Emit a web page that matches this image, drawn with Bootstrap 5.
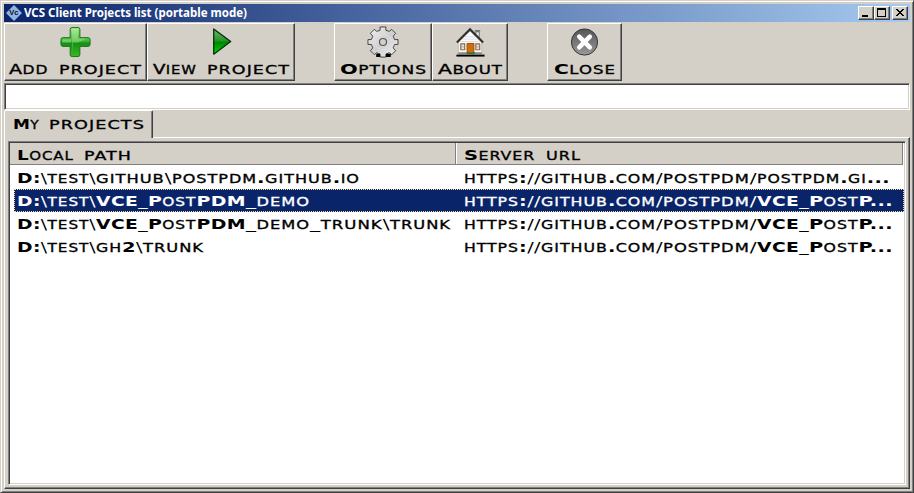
<!DOCTYPE html>
<html lang="en">
<head>
<meta charset="utf-8">
<meta name="viewport" content="width=device-width, initial-scale=1">
<title>VCS Client Projects list</title>
<link rel="stylesheet" href="https://cdn.jsdelivr.net/npm/bootstrap@5.3.0/dist/css/bootstrap.min.css">
<style>
:root { --face:#d4d0c8; --shade:#808080; --dark:#404040; }
body { font-family:"DejaVu Sans",sans-serif; font-size:14px; line-height:20px; color:#000; background:var(--face); }
.win { width:914px; height:493px; background:var(--face); padding:3px 2px 2px 3px; border:1px solid; border-color:var(--face) var(--dark) var(--dark) var(--face); box-shadow:inset 1px 1px #fff, inset -1px -1px var(--shade); }
.titlebar { height:18px; margin-right:1px; background:linear-gradient(90deg,#0a246a,#a6caf0); color:#fff; padding:0 2px 0 2px; }
.titlebar .caption { font-family:"Noto Sans",sans-serif; font-size:12px; font-weight:700; line-height:18px; margin-left:2px; }
.raised { background:var(--face); border:1px solid; border-color:#fff var(--dark) var(--dark) #fff; box-shadow:inset -1px -1px var(--shade); }
.winbtn { width:16px; height:14px; padding:0; }
.winbtn-close { margin-left:2px; }
.winbtn svg, .tool svg { display:block; }
.toolbar-row { height:61px; padding-top:1px; margin-right:1px; }
.tool { height:58px; padding:2px 0 0 0; color:#000; }
.tool svg { width:34px; height:34px; }
.t-add { width:143px; } .t-view { width:148px; margin-right:39px; }
.t-opt { width:98px; } .t-about { width:76px; margin-right:39px; } .t-close { width:75px; }
.sunken { background:#fff; border:1px solid; border-color:var(--shade) #fff #fff var(--shade); box-shadow:inset 1px 1px var(--dark), inset -1px -1px var(--face); }
.entry { height:27px; outline:0; border-radius:0; padding:3px; width:906px; }
.tabstrip { height:27px; position:relative; }
.tab { width:149px; height:28px; background:var(--face); border:solid; border-width:1px 1px 0 1px; border-color:#fff var(--dark) #fff #fff; box-shadow:inset -1px 0 var(--shade); border-radius:2px 2px 0 0; padding:3px 0 0 8px; }
.page { height:352px; margin-right:1px; padding:3px 3px 2px 3px; border:1px solid; border-color:#fff var(--dark) var(--dark) #fff; box-shadow:inset -1px -1px var(--shade); }
.listing { height:344px; padding:1px; }
.heads { height:22px; margin-bottom:1px; background:var(--face); border-bottom:1px solid var(--shade); width:893px; border-right:1px solid var(--shade); }
.head { padding:2px 0 0 7px; }
.head-a { width:446px; border-right:1px solid var(--shade); }
.head-b { border-left:1px solid #fff; }
.line { height:23px; width:890px; margin-left:4px; padding:2px 0 0 3px; }
.line.picked { background:#0a246a; color:#fff; outline:1px dotted #f5db95; outline-offset:-1px; }
.path { width:447px; }
.fit { display:inline-block; white-space:pre; vertical-align:top; text-align:left; }
.fit > span { display:inline-block; transform-origin:0 50%; }
.sc { font-size:11.4px; text-transform:uppercase; letter-spacing:.7px; -webkit-text-stroke:.3px; }
.cap { font-weight:700; letter-spacing:.3px; }
.cap.thin { font-weight:400; word-spacing:3px; -webkit-text-stroke:.4px; }
.cap.rule { font-weight:400; word-spacing:3px; }
</style>
<script src="https://cdn.jsdelivr.net/npm/bootstrap@5.3.0/dist/js/bootstrap.bundle.min.js"></script>
</head>
<body class="overflow-hidden">
<main class="win d-flex flex-column">
  <header class="titlebar d-flex align-items-center">
    <svg width="16" height="16" viewBox="0 0 16 16"><path d="M8 0l8 8-8 8-8-8z" fill="#8fb4e4"/><text x="3.2" y="10.4" font-family="Liberation Sans,sans-serif" font-weight="700" font-size="7.5" fill="#111">Vc</text></svg>
    <div class="caption"><span class="fit" data-w="223" data-plain>VCS Client Projects list (portable mode)</span></div>
    <div class="d-flex ms-auto">
      <button class="winbtn raised" aria-label="Minimize"><svg width="14" height="12"><path d="M3 8h6v2H3z"/></svg></button>
      <button class="winbtn raised" aria-label="Maximize"><svg width="14" height="12" shape-rendering="crispEdges"><path fill-rule="evenodd" d="M2 1h9v9H2zM3 3v6h7V3z"/></svg></button>
      <button class="winbtn winbtn-close raised" aria-label="Close"><svg width="14" height="12" shape-rendering="crispEdges"><path d="M3 2h2v1h1v1h2V3h1V2h2v1h-1v1H9v1H8v1h1v1h1v1h1v1H9V8H8V7H6v1H5v1H3V8h1V7h1V6h1V5H5V4H4V3H3z"/></svg></button>
    </div>
  </header>

  <nav class="toolbar-row d-flex align-items-start">
    <button class="tool raised t-add d-flex flex-column align-items-center">
      <svg viewBox="0 0 34 34"><defs><linearGradient id="green" x1="0" y1="0" x2="0" y2="1"><stop offset="0" stop-color="#a0e58c"/><stop offset=".45" stop-color="#48b83a"/><stop offset=".55" stop-color="#159016"/><stop offset="1" stop-color="#38ba21"/></linearGradient></defs><path d="M13 1.500h6q2 0 2 2V12h8.500q2 0 2 2v5q0 2-2 2H21v8.500q0 2-2 2h-6q-2 0-2-2V21H3.500q-2 0-2-2v-5q0-2 2-2H11V3.500q0-2 2-2z" fill="url(#green)" stroke="#16711a"/><path d="M13 3h6v10h9l-9 4h-5l-1 11zM3 14h9v3H3z" fill="#c6f5b7" opacity=".35"/></svg>
      <div><span class="fit" data-w="50">Add </span><span class="fit" data-w="83">project</span></div>
    </button>
    <button class="tool raised t-view d-flex flex-column align-items-center">
      <svg viewBox="0 0 34 34"><defs><linearGradient id="play" x1="0" y1="0" x2="0" y2="1"><stop stop-color="#6fb86c"/><stop offset=".48" stop-color="#249226"/><stop offset=".53" stop-color="#008600"/><stop offset="1" stop-color="#00dc00"/></linearGradient></defs><path d="M9.500 3v26L27 16z" fill="url(#play)" stroke="#062c08" stroke-width="1.300" stroke-linejoin="round"/></svg>
      <div><span class="fit" data-w="54">View </span><span class="fit" data-w="83">project</span></div>
    </button>
    <button class="tool raised t-opt d-flex flex-column align-items-center">
      <svg viewBox="0 0 34 34"><defs><linearGradient id="gear" x1="0" y1="0" x2="1" y2="1"><stop stop-color="#f4f4f4"/><stop offset=".5" stop-color="#cfcfcf"/><stop offset="1" stop-color="#f2f2f2"/></linearGradient></defs><path d="M14 1h6v3.500l3.500 1L26 3.500l4 4-2.500 3 1.500 3.500h3.500v5H29l-1.500 3.500L30 25.500l-4 4-2.500-2L20 29v3h-6v-3l-3.500-1.500-2.500 2-4-4 2.500-3L5 19H1.500v-5H5l1.500-3.500L4 7.500l4-4 2.500 2 3.500-1z" fill="url(#gear)" stroke="#333" stroke-width=".9"/><path d="M10 28.500h4V32h-4zM20 28.500h5V32h-5z"/><circle cx="17" cy="16.500" r="8" fill="none" stroke="#dedede" stroke-width=".8"/><circle cx="17" cy="16.500" r="3.600" fill="#d4d0c8" stroke="#555" stroke-width="1.200"/></svg>
      <div><span class="fit" data-w="87">Options</span></div>
    </button>
    <button class="tool raised t-about d-flex flex-column align-items-center">
      <svg viewBox="0 0 34 34"><path d="M23 6h3.500v8H23z" fill="#eee" stroke="#555" stroke-width=".8"/><path d="M22 5h5.500" stroke="#444"/><path d="M5 16L17 4l12 12v13H5z" fill="#fafafa" stroke="#999" stroke-width=".5"/><path d="M12 11h10M9 13.500h16M6 16h22M6 18.500h22M6 21h22M6 23.500h22" stroke="#d9d9d9" stroke-width=".8"/><path d="M3.500 17L17 3.500 30.500 17" fill="none" stroke="#303030" stroke-width="2.300"/><path d="M5 27h24v2H5z" fill="#888"/><path d="M3 29.500h29v2H3z"/><path d="M14 18h7v10.500h-7z" fill="#d66a08" stroke="#87551d"/><path d="M14 28h8" stroke="#197a1e" stroke-width="1.500"/><path d="M7.500 18.500h4v6h-4zM23 18.500h4v6h-4z" fill="#dfe6f3" stroke="#9a6a31" stroke-width="1.200"/><path d="M7.500 21.500h4M23 21.500h4" stroke="#8c92a5" stroke-width=".7"/></svg>
      <div><span class="fit" data-w="65">About</span></div>
    </button>
    <button class="tool raised t-close d-flex flex-column align-items-center">
      <svg viewBox="0 0 34 34"><defs><linearGradient id="disc" x1="0" y1="0" x2="0" y2="1"><stop stop-color="#555"/><stop offset=".5" stop-color="#777"/><stop offset="1" stop-color="#999"/></linearGradient></defs><circle cx="16.500" cy="16.500" r="13.500" fill="url(#disc)" stroke="#333"/><path d="M11 11l11 11M22 11L11 22" stroke="#fff" stroke-width="4.600" stroke-linecap="round"/></svg>
      <div><span class="fit" data-w="62">Close</span></div>
    </button>
  </nav>

  <input class="entry sunken d-block" type="text" aria-label="Filter">

  <div class="tabstrip d-flex">
    <div class="tab"><span class="fit" data-w="36">My </span><span class="fit" data-w="96">projects</span></div>
  </div>
  <section class="page">
    <div class="listing sunken">
      <div class="heads d-flex">
        <div class="head head-a"><span class="fit" data-w="67">Local </span><span class="fit" data-w="48">path</span></div>
        <div class="head head-b"><span class="fit" data-w="82">Server </span><span class="fit" data-w="35">url</span></div>
      </div>
      <div class="line d-flex">
        <div class="path"><span class="fit" data-w="79">D:\test\</span><span class="fit" data-w="76">github\</span><span class="fit" data-w="188">postpdm.github.io</span></div>
        <div><span class="fit" data-w="77">https://</span><span class="fit" data-w="122">github.com/</span><span class="fit" data-w="94">postpdm/</span><span class="fit" data-w="133">postpdm.gi...</span></div>
      </div>
      <div class="line picked d-flex">
        <div class="path"><span class="fit" data-w="79">D:\test\</span><span class="fit" data-w="52">VCE_</span><span class="fit" data-w="98">PostPDM</span><span class="fit" data-w="64">_demo</span></div>
        <div><span class="fit" data-w="77">https://</span><span class="fit" data-w="122">github.com/</span><span class="fit" data-w="94">postpdm/</span><span class="fit" data-w="52">VCE_</span><span class="fit" data-w="84">PostP...</span></div>
      </div>
      <div class="line d-flex">
        <div class="path"><span class="fit" data-w="79">D:\test\</span><span class="fit" data-w="52">VCE_</span><span class="fit" data-w="98">PostPDM</span><span class="fit" data-w="64">_demo</span><span class="fit" data-w="80">_trunk\</span><span class="fit" data-w="61">trunk</span></div>
        <div><span class="fit" data-w="77">https://</span><span class="fit" data-w="122">github.com/</span><span class="fit" data-w="94">postpdm/</span><span class="fit" data-w="52">VCE_</span><span class="fit" data-w="84">PostP...</span></div>
      </div>
      <div class="line d-flex">
        <div class="path"><span class="fit" data-w="79">D:\test\</span><span class="fit" data-w="47">gh2\</span><span class="fit" data-w="61">trunk</span></div>
        <div><span class="fit" data-w="77">https://</span><span class="fit" data-w="122">github.com/</span><span class="fit" data-w="94">postpdm/</span><span class="fit" data-w="52">VCE_</span><span class="fit" data-w="84">PostP...</span></div>
      </div>
    </div>
  </section>
</main>
<script>
// Set wide small-caps lettering: lowercase runs become smaller capitals, each word stretched to its measure.
document.querySelectorAll('.fit').forEach(el => {
  const text = el.textContent, inner = document.createElement('span');
  if ('plain' in el.dataset) inner.textContent = text;
  else (text.match(/[a-z]+|[A-Z0-9:.]+|[^a-zA-Z0-9:.]+/g) || []).forEach(run => {
    const s = document.createElement('span');
    s.className = /[a-z]/.test(run) ? 'sc' : /^[AV]$/.test(run) ? 'cap thin' : /^[_\\\/ ]+$/.test(run) ? 'cap rule' : 'cap';
    s.textContent = run;
    inner.append(s);
  });
  el.replaceChildren(inner);
  const w = inner.getBoundingClientRect().width;
  el.style.width = el.dataset.w + 'px';
  inner.style.transform = `scaleX(${el.dataset.w / w})`;
});
</script>
</body>
</html>
